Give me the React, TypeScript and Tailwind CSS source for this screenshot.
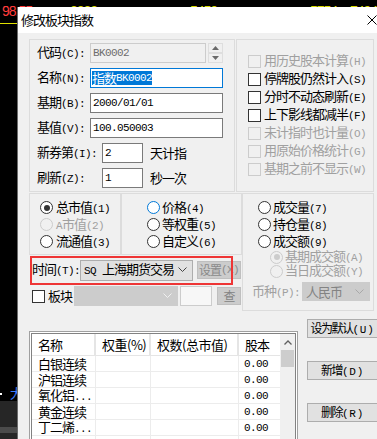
import React from "react";

const ASC = /^[\x20-\x7e]+$/;

type V = "n" | "btn" | "set";

function T({ t, v = "n" }: { t: string; v?: V }) {
  const parts = t.split(/([\x20-\x7e]+)/).filter((p) => p.length > 0);
  const asc =
    v === "btn"
      ? "whitespace-pre font-['Liberation_Mono',monospace] text-[11px] tracking-[0.8px]"
      : "whitespace-pre font-['Liberation_Mono',monospace] text-[11px] tracking-[-0.6px]";
  const cjk = v === "btn" ? "text-[12px] tracking-[-1.5px]" : v === "set" ? "text-[12px] tracking-[-1px]" : "tracking-[-1px]";
  return (
    <>
      {parts.map((p, i) =>
        ASC.test(p) ? (
          <span key={i} className={asc}>
            {p}
          </span>
        ) : (
          <span key={i} className={cjk}>
            {p}
          </span>
        )
      )}
    </>
  );
}

function Check({ disabled }: { disabled?: boolean }) {
  return (
    <span
      className={
        disabled
          ? "block w-[13px] h-[13px] shrink-0 border border-[#cccccc] bg-[#f0f0f0]"
          : "block w-[13px] h-[13px] shrink-0 border border-[#333333] bg-white"
      }
    />
  );
}

function Radio({ checked, disabled, focus }: { checked?: boolean; disabled?: boolean; focus?: boolean }) {
  const cls = disabled
    ? "flex w-[13px] h-[13px] shrink-0 items-center justify-center rounded-full border border-[#cccccc] bg-[#f0f0f0]"
    : focus
    ? "flex w-[13px] h-[13px] shrink-0 items-center justify-center rounded-full border border-[#0078d7] bg-white"
    : "flex w-[13px] h-[13px] shrink-0 items-center justify-center rounded-full border border-[#333333] bg-white";
  return (
    <span className={cls}>
      {checked && (
        <span
          className={
            disabled ? "block w-[6px] h-[6px] rounded-full bg-[#cccccc]" : "block w-[6px] h-[6px] rounded-full bg-[#333333]"
          }
        />
      )}
    </span>
  );
}

function CheckRow({ label, disabled }: { label: string; disabled?: boolean }) {
  return (
    <div
      className={
        disabled
          ? "flex h-[18px] items-center gap-[3px] leading-[16px] text-[#a0a0a0]"
          : "flex h-[18px] items-center gap-[3px] leading-[16px] text-black"
      }
    >
      <Check disabled={disabled} />
      <span className="whitespace-nowrap">
        <T t={label} />
      </span>
    </div>
  );
}

function RadioRow({
  label,
  checked,
  disabled,
  focus,
  cls,
}: {
  label: string;
  checked?: boolean;
  disabled?: boolean;
  focus?: boolean;
  cls: string;
}) {
  return (
    <div className={cls}>
      <Radio checked={checked} disabled={disabled} focus={focus} />
      <span className={disabled ? "whitespace-nowrap text-[#a0a0a0]" : "whitespace-nowrap text-black"}>
        <T t={label} />
      </span>
    </div>
  );
}

function Chevron({ color }: { color: string }) {
  return (
    <svg width="9" height="6" viewBox="0 0 9 6" className="block shrink-0">
      <polyline points="0.5,0.5 4.5,4.5 8.5,0.5" fill="none" stroke={color} strokeWidth="1" />
    </svg>
  );
}

const rows = ["白银连续", "沪铝连续", "氧化铝...", "黄金连续", "丁二烯...", ""];

const topNums = (
  <>
    <span className="absolute left-[2px] top-[4px] text-[#ff3c3c]">98.55</span>
    <span className="absolute left-[70px] top-[4px] text-[#d8d800]">8888</span>
    <span className="absolute left-[190px] top-[4px] text-[#d8d800]">5450</span>
    <span className="absolute left-[310px] top-[4px] text-[#d8d800]">5754</span>
    <span className="absolute left-[350px] top-[4px] text-[#d8d800]">7494</span>
  </>
);

export default function App() {
  return (
    <div className="relative w-[377px] h-[439px] overflow-hidden bg-black font-['Noto_Sans_CJK_SC',sans-serif] text-[13px] leading-[16px] text-black">
      {/* background trading screen */}
      <div className="absolute left-0 top-0 w-[377px] h-[7px] overflow-hidden font-['Liberation_Sans',sans-serif] text-[14px] leading-[15px] tracking-[-1px]">
        {topNums}
      </div>
      <div className="absolute left-0 top-0 w-[17px] h-[24px] overflow-hidden font-['Liberation_Sans',sans-serif] text-[14px] leading-[15px] tracking-[-1px]">
        {topNums}
      </div>
      <div className="absolute left-0 top-[23px] w-[17px] h-px bg-[#e0e000]" />
      <div className="absolute left-0 top-[386px] w-[17px] h-[14px] overflow-hidden">
        <span className="absolute left-0 top-[7px] w-[2px] h-[2px] bg-white" />
        <span className="absolute left-[10px] top-0 text-[13px] leading-[14px] text-[#3c7cff]">大</span>
      </div>
      <div className="absolute left-0 top-[401px] w-[17px] h-[38px] bg-[#262626]" />
      <div className="absolute left-0 top-[427px] w-[17px] h-[6px] bg-[#4b4b4b]" />

      {/* dialog */}
      <div className="absolute left-[17px] top-[7px] w-[380px] h-[432px] overflow-hidden border-l border-[#6b6b6b] bg-[#f0f0f0] flex flex-col">
        {/* title bar */}
        <div className="flex h-[26px] shrink-0 items-center bg-white pl-[3px]">
          <span className="whitespace-nowrap text-[13px]">
            <T t="修改板块指数" />
          </span>
          <svg width="10" height="10" viewBox="0 0 10 10" className="ml-auto mr-[20px]">
            <line x1="0.5" y1="0.5" x2="9.5" y2="9.5" stroke="#000" strokeWidth="1" />
            <line x1="9.5" y1="0.5" x2="0.5" y2="9.5" stroke="#000" strokeWidth="1" />
          </svg>
        </div>

        {/* body */}
        <div className="flex flex-col pl-[11px]">
          {/* top groups */}
          <div className="mt-[6px] flex">
            <div className="flex w-[206px] h-[153px] flex-col gap-[5px] border border-[#dcdcdc] pl-[7px] pt-[3px]">
              <div className="flex h-[20px] items-center">
                <span className="w-[53px] whitespace-nowrap">
                  <T t="代码(C):" />
                </span>
                <div className="flex w-[116px] h-[20px] items-center border border-[#cccccc] bg-[#f0f0f0] pl-[2px] text-[#6d6d6d]">
                  <T t="BK0002" />
                </div>
                <div className="ml-[2px] flex w-[15px] h-[20px] flex-col">
                  <div className="flex h-[10px] items-center justify-center border border-[#dedede]">
                    <svg width="7" height="4" viewBox="0 0 7 4" className="block">
                      <polygon points="0,4 3.5,0 7,4" fill="#6a6a6a" />
                    </svg>
                  </div>
                  <div className="flex h-[10px] items-center justify-center border border-[#dedede]">
                    <svg width="7" height="4" viewBox="0 0 7 4" className="block">
                      <polygon points="0,0 3.5,4 7,0" fill="#6a6a6a" />
                    </svg>
                  </div>
                </div>
              </div>
              <div className="flex h-[20px] items-center">
                <span className="w-[53px] whitespace-nowrap">
                  <T t="名称(N):" />
                </span>
                <div className="flex w-[133px] h-[20px] items-center border border-[#0078d7] bg-white pl-[1px]">
                  <span className="inline-flex h-[14px] items-center whitespace-nowrap bg-[#0078d7] text-white">
                    <T t="指数BK0002" />
                  </span>
                </div>
              </div>
              <div className="flex h-[20px] items-center">
                <span className="w-[53px] whitespace-nowrap">
                  <T t="基期(B):" />
                </span>
                <div className="flex w-[133px] h-[20px] items-center border border-[#7a7a7a] bg-white pl-[2px]">
                  <T t="2000/01/01" />
                </div>
              </div>
              <div className="flex h-[20px] items-center">
                <span className="w-[53px] whitespace-nowrap">
                  <T t="基值(V):" />
                </span>
                <div className="flex w-[133px] h-[20px] items-center border border-[#7a7a7a] bg-white pl-[2px]">
                  <T t="100.050003" />
                </div>
              </div>
              <div className="flex h-[20px] items-center">
                <span className="w-[65px] whitespace-nowrap">
                  <T t="新券第(I):" />
                </span>
                <div className="flex w-[41px] h-[20px] items-start border border-[#7a7a7a] bg-white pl-[2px] pt-[1px]">
                  <T t="2" />
                </div>
                <span className="ml-[7px] whitespace-nowrap">
                  <T t="天计指" />
                </span>
              </div>
              <div className="flex h-[20px] items-center">
                <span className="w-[65px] whitespace-nowrap">
                  <T t="刷新(Z):" />
                </span>
                <div className="flex w-[41px] h-[20px] items-start border border-[#7a7a7a] bg-white pl-[2px] pt-[1px]">
                  <T t="1" />
                </div>
                <span className="ml-[7px] whitespace-nowrap">
                  <T t="秒一次" />
                </span>
              </div>
            </div>
            <div className="ml-[1px] flex w-[138px] h-[153px] flex-col border border-[#dcdcdc] pl-[11px] pt-[12px]">
              <CheckRow label="用历史股本计算(H)" disabled />
              <CheckRow label="停牌股仍然计入(S)" />
              <CheckRow label="分时不动态刷新(E)" />
              <CheckRow label="上下影线都减半(F)" />
              <CheckRow label="未计指时也计量(O)" disabled />
              <CheckRow label="用原始价格统计(G)" disabled />
              <CheckRow label="基期之前不显示(W)" disabled />
            </div>
          </div>

          {/* second section */}
          <div className="mt-[1px] flex">
            <div className="flex w-[213px] flex-col">
              <div className="flex h-[62px]">
                <div className="flex w-[92px] flex-col border border-[#dcdcdc] pl-[10px] pt-[5px] leading-[15px]">
                  <RadioRow cls="flex h-[17px] items-center gap-[3px]" label="总市值(1)" checked />
                  <RadioRow cls="flex h-[17px] items-center gap-[3px]" label="A市值(2)" disabled />
                  <RadioRow cls="flex h-[17px] items-center gap-[3px]" label="流通值(3)" />
                </div>
                <div className="flex w-[121px] flex-col border border-[#dcdcdc] pl-[25px] pt-[5px] leading-[15px]">
                  <RadioRow cls="flex h-[17px] items-center gap-[2px]" label="价格(4)" focus />
                  <RadioRow cls="flex h-[17px] items-center gap-[2px]" label="等权重(5)" />
                  <RadioRow cls="flex h-[17px] items-center gap-[2px]" label="自定义(6)" />
                </div>
              </div>

              {/* time row */}
              <div className="relative flex h-[30px] items-center pl-[3px]">
                <span className="w-[48px] whitespace-nowrap">
                  <T t="时间(T):" />
                </span>
                <div className="flex w-[113px] h-[21px] items-center border border-[#adadad] bg-[#e1e1e1] pl-[3px] pr-[5px]">
                  <span className="whitespace-nowrap">
                    <T t="SQ 上海期货交易" />
                  </span>
                  <span className="ml-auto">
                    <Chevron color="#444444" />
                  </span>
                </div>
                <div className="ml-[4px] flex w-[44px] h-[18px] items-center justify-center whitespace-nowrap border border-[#bfbfbf] bg-[#cccccc] text-[#8a8a8a]">
                  <T t="设置(X)" v="set" />
                </div>
                <div className="pointer-events-none absolute left-[1px] top-[1px] w-[203px] h-[29px] border-2 border-[#ee3535]" />
              </div>

              {/* 板块 row */}
              <div className="mt-[1px] flex h-[20px] items-center pl-[3px]">
                <Check />
                <span className="ml-[3px] whitespace-nowrap">
                  <T t="板块" />
                </span>
                <div className="ml-[2px] flex w-[104px] h-[20px] items-center border border-[#cccccc] bg-[#cccccc] pr-[5px]">
                  <span className="ml-auto">
                    <Chevron color="#f0f0f0" />
                  </span>
                </div>
                <div className="ml-[2px] w-[32px] h-[20px] border border-[#cccccc] bg-[#f7f7f7]" />
                <div className="ml-[5px] flex w-[24px] h-[18px] items-center justify-center border border-[#bfbfbf] bg-[#cccccc] text-[#838383]">
                  <T t="查" v="set" />
                </div>
              </div>
            </div>

            {/* group C */}
            <div className="flex w-[132px] h-[118px] flex-col border border-[#dcdcdc] pt-[5px] leading-[14px]">
              <RadioRow cls="flex h-[17px] items-center gap-[2px] pl-[15px]" label="成交量(7)" />
              <RadioRow cls="flex h-[17px] items-center gap-[2px] pl-[15px]" label="持仓量(8)" />
              <RadioRow cls="flex h-[17px] items-center gap-[2px] pl-[15px]" label="成交额(9)" />
              <RadioRow cls="flex h-[14px] items-center gap-[2px] pl-[27px]" label="基期成交额(A)" checked disabled />
              <RadioRow cls="flex h-[14px] items-center gap-[2px] pl-[27px]" label="当日成交额(Y)" disabled />
              <div className="mt-[4px] flex h-[19px] items-center pl-[9px]">
                <span className="w-[50px] whitespace-nowrap text-[#a0a0a0]">
                  <T t="币种(P):" />
                </span>
                <div className="flex w-[68px] h-[19px] items-center border border-[#cccccc] bg-[#cccccc] pl-[3px] pr-[5px] text-[#838383]">
                  <span className="whitespace-nowrap">
                    <T t="人民币" />
                  </span>
                  <span className="ml-auto">
                    <Chevron color="#a8a8a8" />
                  </span>
                </div>
              </div>
            </div>
          </div>

          {/* bottom section */}
          <div className="flex items-start">
            <div className="mt-[20px] w-[269px] h-[120px] border border-[#a0a0a0] bg-white p-px">
              <div className="flex h-full border border-[#828282] bg-white">
                <div className="flex w-[248px] flex-col">
                  <div className="flex h-[22px] shrink-0 border-b border-[#e5e5e5]">
                    <div className="flex w-[64px] items-center border-r-2 border-[#e5e5e5] pl-[6px]">
                      <span className="tracking-[-1px]">名称</span>
                    </div>
                    <div className="flex w-[55px] items-center border-r-2 border-[#e5e5e5] pl-[6px]">
                      <span className="whitespace-nowrap tracking-[-0.5px]">权重(%)</span>
                    </div>
                    <div className="flex w-[88px] items-center border-r-2 border-[#e5e5e5] pl-[6px]">
                      <span className="whitespace-nowrap tracking-[-0.5px]">权数(总市值)</span>
                    </div>
                    <div className="flex w-[41px] items-center pl-[6px]">
                      <span className="tracking-[-1px]">股本</span>
                    </div>
                  </div>
                  {rows.map((r, i) => (
                    <div key={i} className="flex h-[16px] shrink-0 border-b border-[#ececec] leading-[14px]">
                      <div className="flex w-[64px] items-center border-r border-[#ececec] pl-[6px]">
                        <span className="whitespace-nowrap">
                          <T t={r} />
                        </span>
                      </div>
                      <div className="w-[55px] border-r border-[#ececec]" />
                      <div className="w-[88px] border-r border-[#ececec]" />
                      <div className="flex w-[41px] items-center pl-[5px]">{r && <T t="0.00" />}</div>
                    </div>
                  ))}
                </div>
                <div className="flex w-[16px] flex-col bg-[#f0f0f0]">
                  <div className="flex h-[16px] items-center justify-center">
                    <svg width="8" height="5" viewBox="0 0 8 5" className="block">
                      <polyline points="0.5,4.5 4,1 7.5,4.5" fill="none" stroke="#606060" strokeWidth="1.3" />
                    </svg>
                  </div>
                  <div className="mx-px h-[17px] bg-[#cdcdcd]" />
                </div>
              </div>
            </div>

            <div className="ml-[9px] mt-[8px] flex flex-col gap-[23px]">
              <div className="flex w-[71px] h-[19px] items-center justify-center border border-[#adadad] bg-[#e1e1e1]">
                <span className="whitespace-nowrap">
                  <T t="设为默认(U)" v="btn" />
                </span>
              </div>
              <div className="flex w-[71px] h-[19px] items-center justify-center border border-[#adadad] bg-[#e1e1e1]">
                <span className="whitespace-nowrap">
                  <T t="新增(D)" v="btn" />
                </span>
              </div>
              <div className="flex w-[71px] h-[19px] items-center justify-center border border-[#adadad] bg-[#e1e1e1]">
                <span className="whitespace-nowrap">
                  <T t="删除(R)" v="btn" />
                </span>
              </div>
              <div className="flex w-[71px] h-[19px] items-center justify-center border border-[#adadad] bg-[#e1e1e1]" />
            </div>
          </div>
        </div>
      </div>
    </div>
  );
}
